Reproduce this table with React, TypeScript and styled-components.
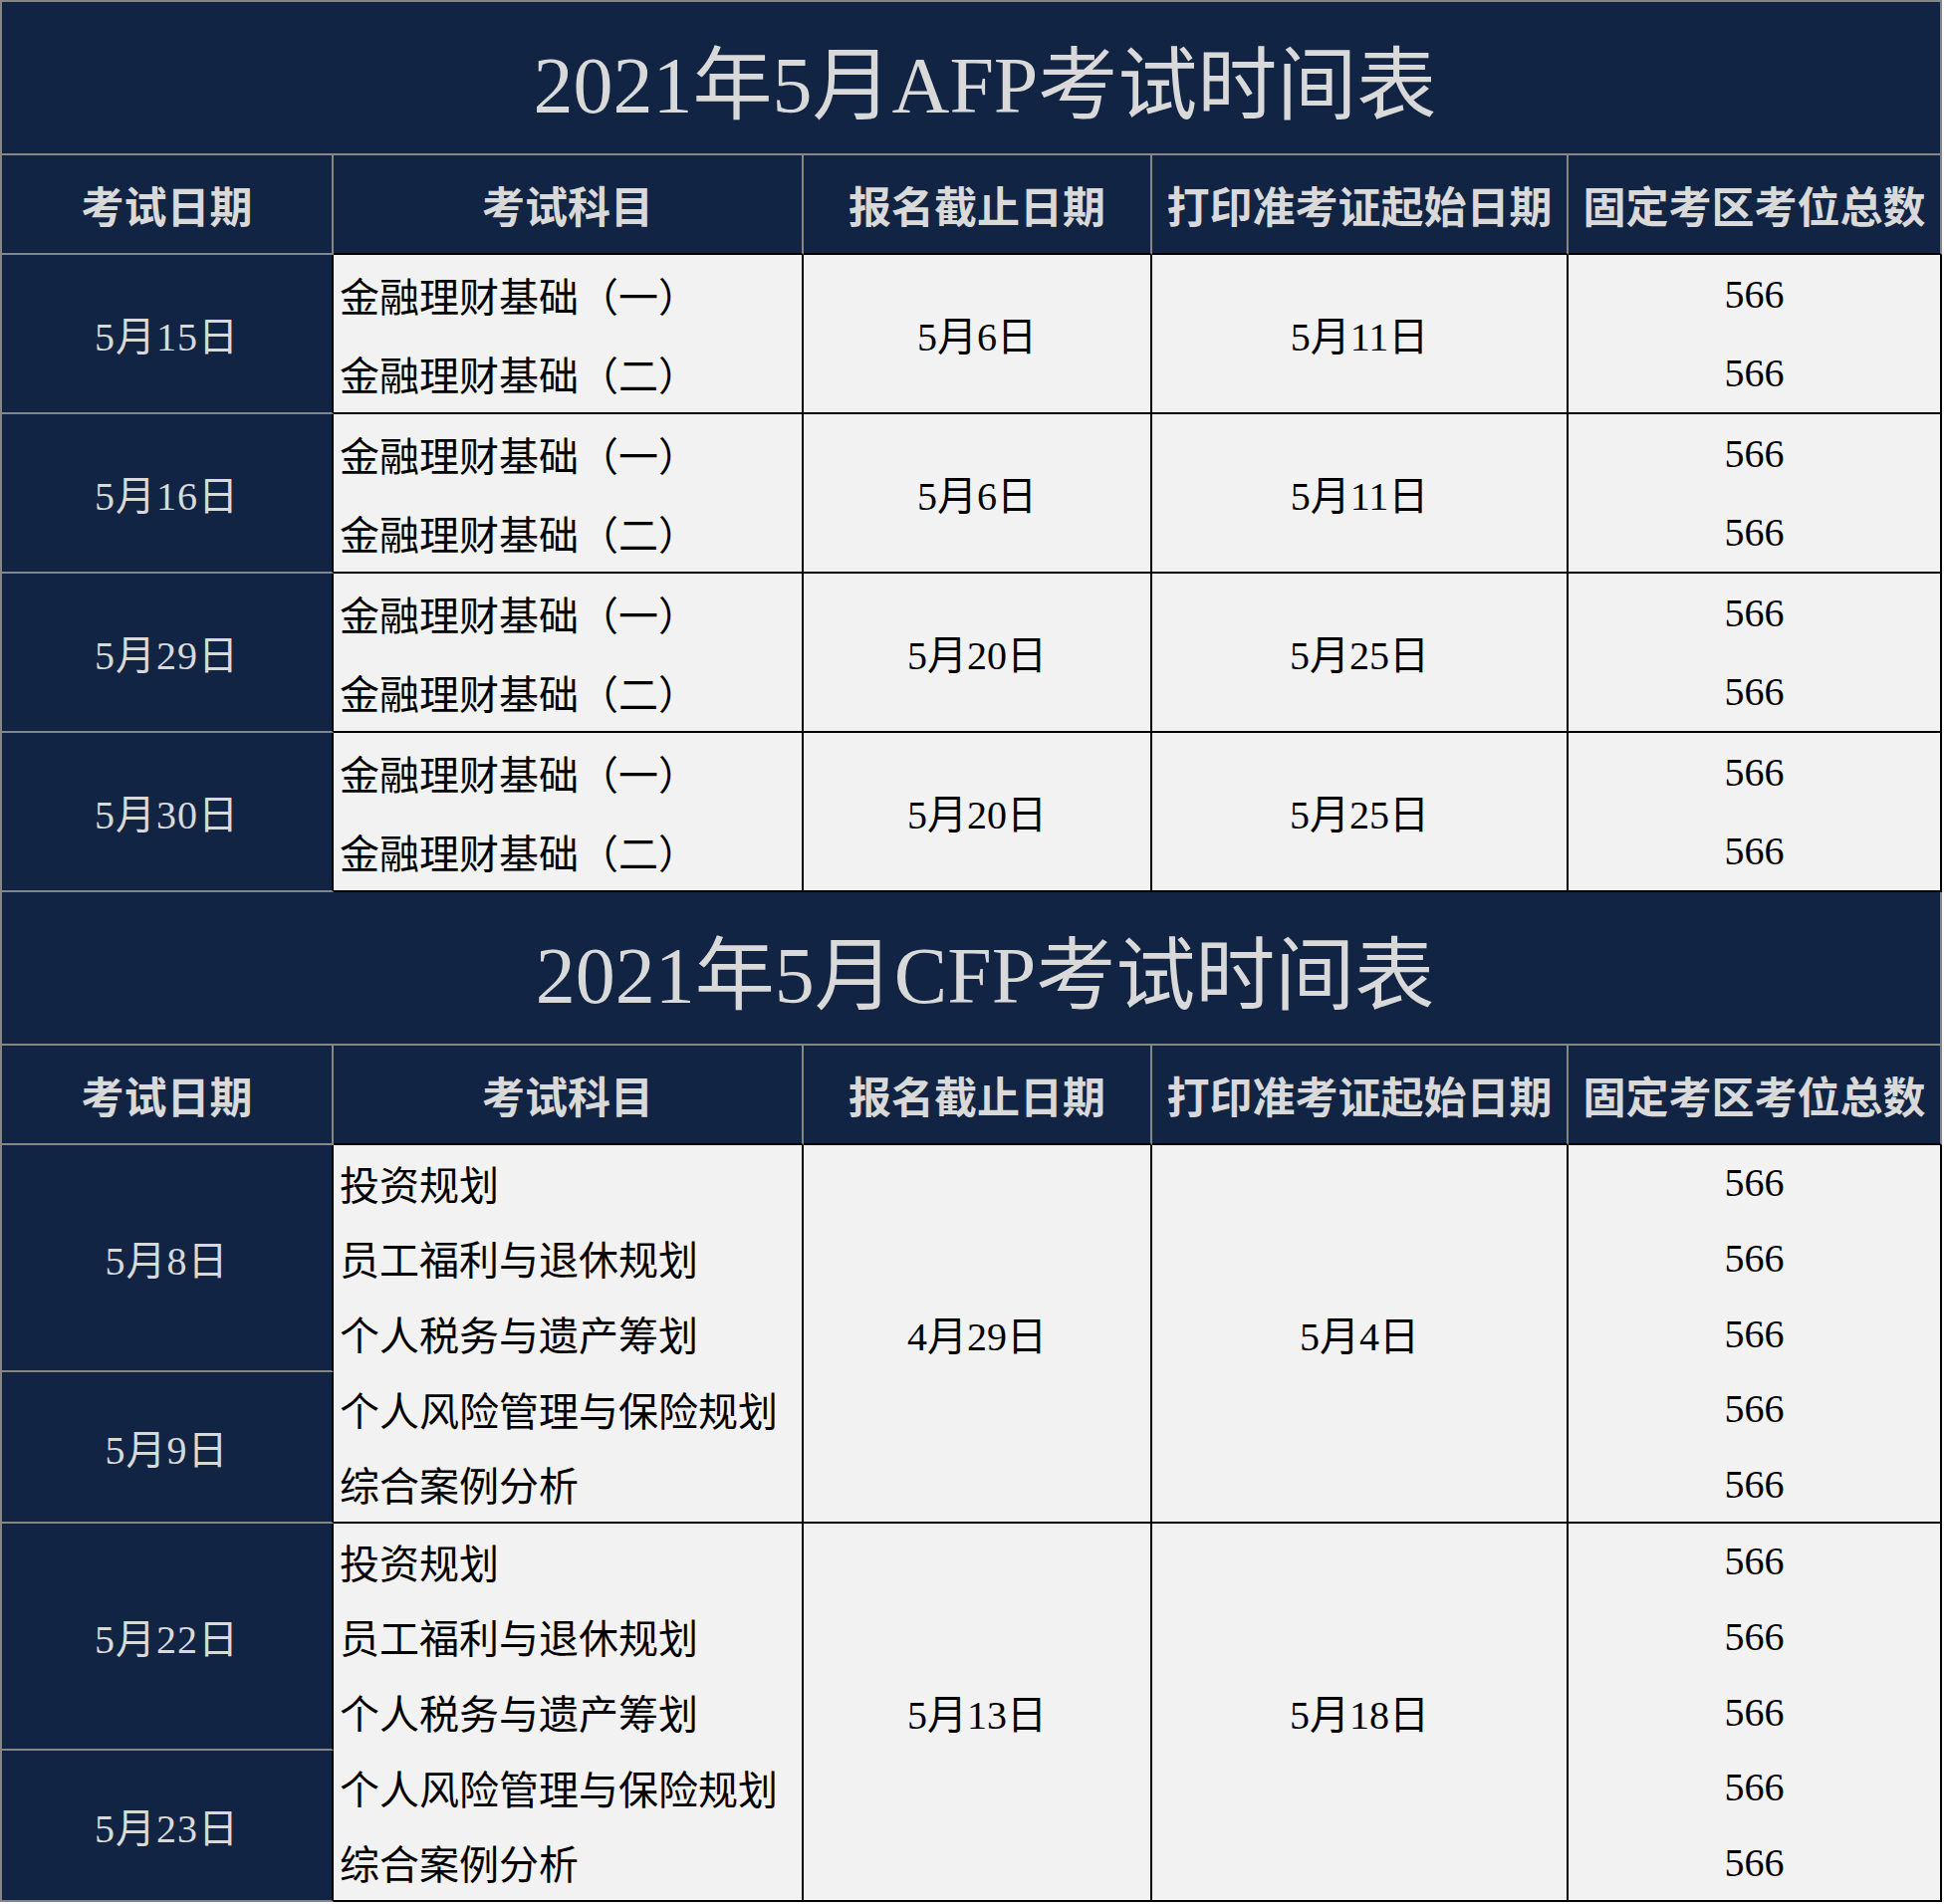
import { Fragment } from 'react';
import styled, { createGlobalStyle } from 'styled-components';

const NAVY = '#122443';
const RULE = '#868686';
const PALE = '#d9d9d9';

interface ExamDate {
    label: string;
    lines: number;
}

interface Group {
    dates: ExamDate[];
    subjects: string[];
    deadline: string;
    print: string;
    seats: string[];
}

interface Schedule {
    title: string;
    line: number;
    groups: Group[];
}

const afpSubjects = ['金融理财基础（一）', '金融理财基础（二）'];
const cfpSubjects = ['投资规划', '员工福利与退休规划', '个人税务与遗产筹划', '个人风险管理与保险规划', '综合案例分析'];

const schedules: Schedule[] = [
    {
        title: '2021年5月AFP考试时间表',
        line: 80,
        groups: [
            { dates: [{ label: '5月15日', lines: 2 }], subjects: afpSubjects, deadline: '5月6日', print: '5月11日', seats: ['566', '566'] },
            { dates: [{ label: '5月16日', lines: 2 }], subjects: afpSubjects, deadline: '5月6日', print: '5月11日', seats: ['566', '566'] },
            { dates: [{ label: '5月29日', lines: 2 }], subjects: afpSubjects, deadline: '5月20日', print: '5月25日', seats: ['566', '566'] },
            { dates: [{ label: '5月30日', lines: 2 }], subjects: afpSubjects, deadline: '5月20日', print: '5月25日', seats: ['566', '566'] },
        ],
    },
    {
        title: '2021年5月CFP考试时间表',
        line: 76,
        groups: [
            {
                dates: [{ label: '5月8日', lines: 3 }, { label: '5月9日', lines: 2 }],
                subjects: cfpSubjects,
                deadline: '4月29日',
                print: '5月4日',
                seats: ['566', '566', '566', '566', '566'],
            },
            {
                dates: [{ label: '5月22日', lines: 3 }, { label: '5月23日', lines: 2 }],
                subjects: cfpSubjects,
                deadline: '5月13日',
                print: '5月18日',
                seats: ['566', '566', '566', '566', '566'],
            },
        ],
    },
];

const headings = ['考试日期', '考试科目', '报名截止日期', '打印准考证起始日期', '固定考区考位总数'];

const GlobalStyle = createGlobalStyle`
    html, body {
        margin: 0;
        padding: 0;
        background: #ffffff;
    }
    * {
        box-sizing: border-box;
    }
`;

const Sheet = styled.div`
    width: 1950px;
    border-top: 2px solid ${RULE};
    border-left: 2px solid ${RULE};
    font-family: "Liberation Serif", "Noto Sans CJK SC", serif;
`;

const TitleBar = styled.div`
    height: 154px;
    display: flex;
    align-items: center;
    justify-content: center;
    padding-left: 28px;
    background: ${NAVY};
    color: ${PALE};
    font-size: 80px;
    font-weight: 400;
    border-right: 2px solid ${RULE};
    border-bottom: 2px solid ${RULE};
    white-space: nowrap;
`;

const Table = styled.div<{ $line: number }>`
    display: grid;
    grid-template-columns: 333px 472px 350px 418px 375px;
    grid-template-rows: 100px;
    grid-auto-rows: ${({ $line }) => $line}px;
`;

const HeadCell = styled.div<{ $overLight: boolean }>`
    display: flex;
    align-items: center;
    justify-content: center;
    background: ${NAVY};
    color: ${PALE};
    font-size: 43px;
    font-weight: 700;
    white-space: nowrap;
    border-right: 2px solid ${RULE};
    border-bottom: 2px solid ${({ $overLight }) => ($overLight ? '#000' : RULE)};
`;

const DateCell = styled.div<{ $row: number; $span: number }>`
    grid-column: 1;
    grid-row: ${({ $row, $span }) => `${$row} / span ${$span}`};
    display: flex;
    align-items: center;
    justify-content: center;
    background: ${NAVY};
    color: ${PALE};
    font-size: 40px;
    letter-spacing: 1px;
    border-right: 2px solid #000;
    border-bottom: 2px solid ${RULE};
`;

const DataCell = styled.div<{ $col: number; $row: number; $span: number; $left?: boolean }>`
    grid-column: ${({ $col }) => $col};
    grid-row: ${({ $row, $span }) => `${$row} / span ${$span}`};
    display: flex;
    flex-direction: column;
    justify-content: center;
    align-items: ${({ $left }) => ($left ? 'flex-start' : 'center')};
    padding-left: ${({ $left }) => ($left ? '6px' : '0')};
    background: #f2f2f2;
    color: #000;
    font-size: 40px;
    white-space: nowrap;
    border-right: 2px solid #000;
    border-bottom: 2px solid #000;
`;

const Line = styled.div`
    flex: 1;
    display: flex;
    align-items: center;
`;

function ScheduleTable({ schedule }: { schedule: Schedule }) {
    let row = 2;
    return (
        <>
            <TitleBar>{schedule.title}</TitleBar>
            <Table $line={schedule.line}>
                {headings.map((h, i) => (
                    <HeadCell key={h} $overLight={i > 0}>{h}</HeadCell>
                ))}
                {schedule.groups.map((g, gi) => {
                    const start = row;
                    const total = g.subjects.length;
                    row += total;
                    let dateRow = start;
                    return (
                        <Fragment key={gi}>
                            {g.dates.map((d) => {
                                const r = dateRow;
                                dateRow += d.lines;
                                return (
                                    <DateCell key={d.label} $row={r} $span={d.lines}>{d.label}</DateCell>
                                );
                            })}
                            <DataCell $col={2} $row={start} $span={total} $left>
                                {g.subjects.map((s, si) => (
                                    <Line key={si}>{s}</Line>
                                ))}
                            </DataCell>
                            <DataCell $col={3} $row={start} $span={total}>{g.deadline}</DataCell>
                            <DataCell $col={4} $row={start} $span={total}>{g.print}</DataCell>
                            <DataCell $col={5} $row={start} $span={total}>
                                {g.seats.map((s, si) => (
                                    <Line key={si}>{s}</Line>
                                ))}
                            </DataCell>
                        </Fragment>
                    );
                })}
            </Table>
        </>
    );
}

export default function App() {
    return (
        <>
            <GlobalStyle />
            <Sheet>
                {schedules.map((s) => (
                    <ScheduleTable key={s.title} schedule={s} />
                ))}
            </Sheet>
        </>
    );
}
